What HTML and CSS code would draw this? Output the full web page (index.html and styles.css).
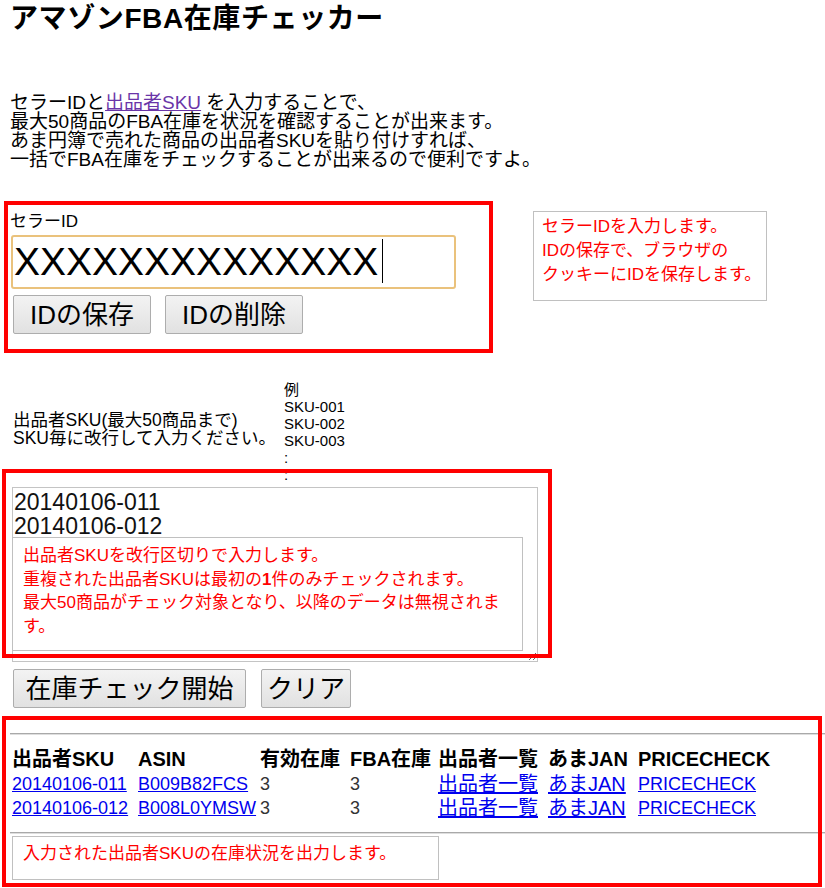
FILE: index.html
```html
<!DOCTYPE html>
<html lang="ja">
<head>
<meta charset="utf-8">
<title>アマゾンFBA在庫チェッカー</title>
<link rel="stylesheet" href="styles.css">
</head>
<body>
<div class="page">
  <h1 class="title">アマゾンFBA在庫チェッカー</h1>
  <p class="intro">セラーIDと<a href="#" class="visited">出品者SKU</a> を入力することで、<br>最大50商品のFBA在庫を状況を確認することが出来ます。<br>あま円簿で売れた商品の出品者SKUを貼り付けすれば、<br>一括でFBA在庫をチェックすることが出来るので便利ですよ。</p>

  <section class="seller">
    <div class="seller-label">セラーID</div>
    <input class="seller-input" type="text" value="XXXXXXXXXXXXXX">
    <div class="btn-row">
      <button class="btn btn-id">IDの保存</button>
      <button class="btn btn-id">IDの削除</button>
    </div>
  </section>

  <section class="sku">
    <div class="sku-head">
      <div class="sku-label">出品者SKU(最大50商品まで)<br>SKU毎に改行して入力ください。</div>
      <div class="sku-example">例<br>SKU-001<br>SKU-002<br>SKU-003<br>:<br>:</div>
    </div>
    <textarea class="sku-input">20140106-011
20140106-012</textarea>
    <div class="btn-row btn-row-2">
      <button class="btn btn-check">在庫チェック開始</button>
      <button class="btn btn-clear">クリア</button>
    </div>
  </section>

  <section class="results">
    <hr class="rule">
    <table class="result-table">
      <colgroup>
        <col class="c-sku"><col class="c-asin"><col class="c-stock"><col class="c-fba"><col class="c-list"><col class="c-jan"><col class="c-price">
      </colgroup>
      <thead>
        <tr><th>出品者SKU</th><th>ASIN</th><th>有効在庫</th><th>FBA在庫</th><th>出品者一覧</th><th>あまJAN</th><th>PRICECHECK</th></tr>
      </thead>
      <tbody>
        <tr><td><a href="#">20140106-011</a></td><td><a href="#">B009B82FCS</a></td><td>3</td><td>3</td><td class="cjk"><a href="#">出品者一覧</a></td><td class="cjk"><a href="#">あまJAN</a></td><td><a href="#">PRICECHECK</a></td></tr>
        <tr><td><a href="#">20140106-012</a></td><td><a href="#">B008L0YMSW</a></td><td>3</td><td>3</td><td class="cjk"><a href="#">出品者一覧</a></td><td class="cjk"><a href="#">あまJAN</a></td><td><a href="#">PRICECHECK</a></td></tr>
      </tbody>
    </table>
    <hr class="rule">
  </section>

  <span class="caret"></span>

  <div class="frame frame-seller"></div>
  <div class="frame frame-sku"></div>
  <div class="frame frame-result"></div>

  <div class="note note-seller">セラーIDを入力します。<br>IDの保存で、ブラウザの<br>クッキーにIDを保存します。</div>
  <div class="note note-sku">出品者SKUを改行区切りで入力します。<br>重複された出品者SKUは最初の<b>1</b>件のみチェックされます。<br>最大50商品がチェック対象となり、以降のデータは無視されま<br>す。</div>
  <div class="note note-result">入力された出品者SKUの在庫状況を出力します。</div>
</div>
</body>
</html>
```

FILE: styles.css
```css
html, body {
  margin: 0;
  padding: 0;
  background: #fff;
}

.page {
  position: relative;
  box-sizing: border-box;
  min-height: 888px;
  padding: 3px 0 0 10px;
  font-family: "Liberation Sans", "Noto Sans CJK JP", sans-serif;
  color: #000;
}

.title {
  margin: 0;
  font-size: 28px;
  line-height: 32px;
  font-weight: bold;
  letter-spacing: 0.6px;
}

.intro {
  margin: 58px 0 0;
  font-size: 19px;
  line-height: 19px;
}

.visited {
  color: #6a35a8;
}

.seller {
  margin-top: 43px;
}

.seller-label {
  font-size: 17px;
  line-height: 20px;
}

.seller-input {
  display: block;
  margin: 3px 0 0 1px;
  width: 445px;
  height: 54px;
  box-sizing: border-box;
  border: 2px solid #eac27c;
  border-radius: 3px;
  padding: 0 1px;
  font-family: "Liberation Sans", "Noto Sans CJK JP", sans-serif;
  font-size: 39px;
  color: #000;
  background: #fff;
  outline: none;
}

.btn-row {
  display: flex;
  gap: 14px;
  padding-left: 3px;
  margin-top: 6px;
}

.btn-row-2 {
  gap: 15px;
  margin-top: 7px;
}

.btn {
  height: 39px;
  box-sizing: border-box;
  padding: 0;
  border: 1px solid #adadad;
  border-radius: 2px;
  background: linear-gradient(#f3f3f3, #e1e1e1);
  font-family: "Liberation Sans", "Noto Sans CJK JP", sans-serif;
  font-size: 26px;
  line-height: 1;
  color: #000;
}

.btn-id {
  width: 138px;
}

.btn-check {
  width: 233px;
}

.btn-clear {
  width: 90px;
}

.sku {
  margin-top: 47px;
}

.sku-head {
  display: flex;
  align-items: center;
}

.sku-label {
  width: 274px;
  box-sizing: border-box;
  padding: 0 0 6px 3px;
  font-size: 17.5px;
  line-height: 18px;
  white-space: nowrap;
}

.sku-example {
  font-size: 15px;
  line-height: 17px;
}

.sku-input {
  display: block;
  margin: 4px 0 0 2px;
  width: 526px;
  height: 175px;
  box-sizing: border-box;
  border: 1px solid #c4c4c4;
  padding: 3px 1px 2px;
  font-family: "Liberation Sans", "Noto Sans CJK JP", sans-serif;
  font-size: 23px;
  line-height: 23.5px;
  color: #111;
  background: #fff;
}

.results {
  margin-top: 25px;
}

.rule {
  margin: 0;
  height: 0;
  border: none;
  border-top: 1px solid #a9a9a9;
  border-bottom: 1px solid #dedede;
}

.result-table {
  margin: 12px 0 12px 2px;
  border-collapse: collapse;
  table-layout: fixed;
  width: 766px;
}

.c-sku { width: 126px; }
.c-asin { width: 122px; }
.c-stock { width: 90px; }
.c-fba { width: 88px; }
.c-list { width: 110px; }
.c-jan { width: 90px; }
.c-price { width: 140px; }

.result-table th {
  padding: 0;
  text-align: left;
  font-size: 20px;
  line-height: 25px;
  font-weight: bold;
  white-space: nowrap;
}

.result-table td {
  padding: 0;
  font-size: 18px;
  line-height: 24px;
  color: #333;
  white-space: nowrap;
}

.result-table td.cjk {
  font-size: 20px;
}

.result-table a {
  color: #0000ee;
}

.caret {
  position: absolute;
  left: 382px;
  top: 239px;
  width: 1px;
  height: 44px;
  background: #000;
}

.frame {
  position: absolute;
  box-sizing: border-box;
  border: 4px solid #ff0000;
  pointer-events: none;
}

.frame-seller {
  left: 4px;
  top: 201px;
  width: 489px;
  height: 152px;
}

.frame-sku {
  left: 2px;
  top: 469px;
  width: 550px;
  height: 189px;
}

.frame-result {
  left: 2px;
  top: 716px;
  width: 820px;
  height: 171px;
}

.note {
  position: absolute;
  box-sizing: border-box;
  background: #fff;
  border: 1px solid #c0c0c0;
  color: #ff0000;
  font-size: 17px;
  white-space: nowrap;
}

.note-seller {
  left: 533px;
  top: 211px;
  width: 234px;
  height: 90px;
  padding: 3px 8px;
  line-height: 24px;
}

.note-sku {
  left: 12px;
  top: 537px;
  width: 511px;
  height: 114px;
  padding: 6px 10px;
  line-height: 23.5px;
}

.note-result {
  left: 12px;
  top: 836px;
  width: 427px;
  height: 44px;
  padding: 5px 10px;
  line-height: 24px;
}
```
